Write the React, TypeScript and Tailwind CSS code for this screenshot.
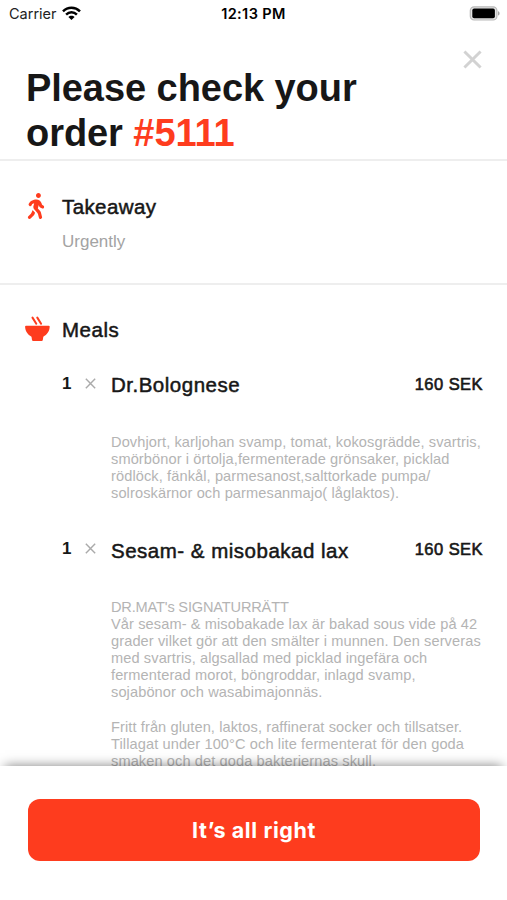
import { FaWalking } from 'react-icons/fa'

const meals = [
  {
    name: 'Dr.Bolognese',
    nameClass: 'pt-[7px]',
    quantity: 1,
    price: '160 SEK',
    description: [
      'Dovhjort, karljohan svamp, tomat, kokosgrädde, svartris,',
      'smörbönor i örtolja,fermenterade grönsaker, picklad',
      'rödlöck, fänkål, parmesanost,salttorkade pumpa/',
      'solroskärnor och parmesanmajo( låglaktos).',
    ],
  },
  {
    name: 'Sesam- & misobakad lax',
    nameClass: 'pt-[8px]',
    quantity: 1,
    price: '160 SEK',
    heading: "DR.MAT's SIGNATURRÄTT",
    description: [
      'Vår sesam- & misobakade lax är bakad sous vide på 42',
      'grader vilket gör att den smälter i munnen. Den serveras',
      'med svartris, algsallad med picklad ingefära och',
      'fermenterad morot, böngroddar, inlagd svamp,',
      'sojabönor och wasabimajonnäs.',
      '',
      'Fritt från gluten, laktos, raffinerat socker och tillsatser.',
      'Tillagat under 100°C och lite fermenterat för den goda',
      'smaken och det goda bakteriernas skull.',
    ],
  },
]

function WifiIcon() {
  return (
    <svg className="ml-[5px] h-[15px] w-[19px]" viewBox="0 0 19 15" fill="none" stroke="#000" strokeWidth="2.5">
      <path d="M1 5.3C5.8.6 13.2.6 18 5.3" />
      <path d="M4.1 8.6c3.1-3 7.7-3 10.8 0" />
      <path d="M6.4 10.9c1.6-1.7 4.6-1.7 6.2 0L9.5 14Z" fill="#000" stroke="none" />
    </svg>
  )
}

function BatteryIcon() {
  return (
    <svg className="h-[15px] w-[31px]" viewBox="0 0 31 15">
      <rect x="1.3" y="0.8" width="26.6" height="13.2" rx="3.8" fill="#e4e4e4" stroke="#b9b9b9" strokeWidth="1.2" />
      <rect x="3.3" y="2.6" width="22.6" height="9.6" rx="1.8" fill="#000" />
      <path d="M29 5.3c2.1.7 2.1 3.5 0 4.2Z" fill="#a6a6a6" />
    </svg>
  )
}

function BowlIcon() {
  return (
    <svg className="h-[26px] w-[26px]" viewBox="0 0 26 26" fill="#fe3c1e">
      <path d="M8.5 1.6 12.3 7.7M13.3 1.6l3.8 6.1" stroke="#fe3c1e" strokeWidth="2" fill="none" strokeLinecap="round" />
      <path d="M2 9.8h22.8c.5 0 .9.3.9.8 0 4.4-2.7 8.2-6.4 10.2l-.5 3.2c-.1.6-.5.9-1.1.9H9.1c-.6 0-1-.3-1.1-.9l-.5-3.2C3.8 18.8 1.1 15 1.1 10.6c0-.5.4-.8.9-.8Z" />
    </svg>
  )
}

function CloseIcon({ className, strokeWidth }: { className: string; strokeWidth: number }) {
  return (
    <svg className={className} viewBox="0 0 20 20" fill="none" stroke="currentColor" strokeWidth={strokeWidth}>
      <path d="M1.5 1.5l17 17M18.5 1.5l-17 17" />
    </svg>
  )
}

function Meal({ meal }: { meal: (typeof meals)[number] }) {
  return (
    <article className="flex h-[165px] shrink-0 pl-[62px] pr-6">
      <span className="w-[23px] pt-[8px] text-[17px] font-bold leading-[20px]">{meal.quantity}</span>
      <CloseIcon className="mt-[12px] h-[11px] w-[11px] shrink-0 text-[#aaa]" strokeWidth={2.6} />
      <div className="ml-[15px] min-w-0 flex-1">
        <div className="flex h-[31px] justify-between">
          <h3
            className={`whitespace-nowrap text-[20.5px] leading-[24px] tracking-[0.5px] [-webkit-text-stroke:0.5px] ${meal.nameClass}`}
          >
            {meal.name}
          </h3>
          <span className="whitespace-nowrap pt-[8px] text-[16.5px] leading-[20px] tracking-[0.45px] [-webkit-text-stroke:0.6px]">
            {meal.price}
          </span>
        </div>
        <div className="mt-[37px] text-[14.6px] leading-[17.1px] tracking-[0.1px] text-[#b4b4b4]">
          {meal.heading && <p className="h-[17.1px] whitespace-nowrap tracking-[-0.18px]">{meal.heading}</p>}
          {meal.description.map((line, i) => (
            <p key={i} className="h-[17.1px] whitespace-nowrap">
              {line}
            </p>
          ))}
        </div>
      </div>
    </article>
  )
}

export default function App() {
  return (
    <div className="flex h-[900px] w-[507px] flex-col overflow-hidden bg-white font-['Liberation_Sans',sans-serif] text-[#171717]">
      <div className="grid h-[27px] shrink-0 grid-cols-3 items-center pl-[9px] pr-[7px] font-[Inter,sans-serif] text-[14.5px] text-black">
        <div className="flex items-center">
          <span className="text-[#222]">Carrier</span>
          <WifiIcon />
        </div>
        <span className="-ml-[2px] text-center font-semibold tracking-[0.4px]">12:13 PM</span>
        <div className="flex justify-end">
          <BatteryIcon />
        </div>
      </div>

      <header className="flex h-[134px] shrink-0 justify-between border-b-2 border-[#eee] pl-[26px] pr-[25px]">
        <h1 className="whitespace-nowrap pt-[39px] text-[38px] font-bold leading-[45px] tracking-[-0.06px]">
          Please check your
          <br />
          order <span className="text-[#fe3c1e]">#5111</span>
        </h1>
        <button aria-label="Close" className="mt-[23px] h-[19px] text-[#d2d2d2]">
          <CloseIcon className="h-[19px] w-[19px]" strokeWidth={3.1} />
        </button>
      </header>

      <section className="flex h-[124px] shrink-0 border-b-2 border-[#eee] pl-[26px] pt-[32px]">
        <FaWalking className="h-[26px] w-[20px] text-[#fe3c1e]" />
        <div className="ml-[16px]">
          <h2 className="text-[20.5px] leading-[28px] tracking-[0.4px] [-webkit-text-stroke:0.5px]">Takeaway</h2>
          <p className="mt-[10px] text-[17px] leading-[22px] text-[#a3a3a3]">Urgently</p>
        </div>
      </section>

      <main className="flex min-h-0 flex-1 flex-col overflow-hidden">
        <div className="flex h-[81px] shrink-0 pl-[24px] pt-[31px]">
          <BowlIcon />
          <h2 className="ml-[12px] text-[20.5px] leading-[28px] tracking-[0.5px] [-webkit-text-stroke:0.5px]">Meals</h2>
        </div>
        {meals.map((meal) => (
          <Meal key={meal.name} meal={meal} />
        ))}
      </main>

      <footer className="relative h-[134px] shrink-0">
        <div className="absolute inset-x-[5px] inset-y-0 shadow-[0_0_11px_rgba(0,0,0,0.5)]" />
        <div className="relative h-full bg-white pl-[28px] pr-[27px] pt-[33px]">
          <button className="h-[62px] w-full rounded-[12px] bg-[#fe3c1e] font-[Inter,sans-serif] text-[21.5px] font-bold tracking-[0.6px] text-white">
            It’s all right
          </button>
        </div>
      </footer>
    </div>
  )
}
